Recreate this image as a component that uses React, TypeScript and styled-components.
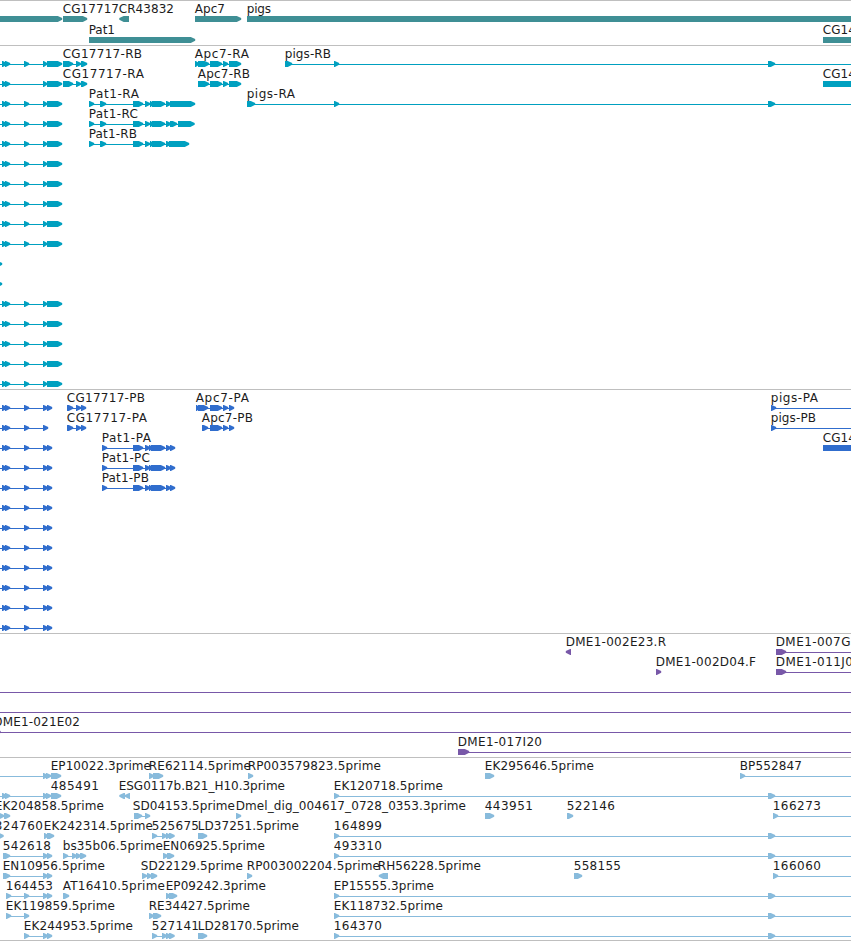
import React from "react";
import styled, { createGlobalStyle } from "styled-components";

const GlobalStyle = createGlobalStyle`
  html, body { margin: 0; padding: 0; background: #fff; overflow: hidden; }
`;

const WIDTH = 851;

type Direction = "right" | "left" | "none";
type Block = [start: number, end: number, direction?: Direction];

interface Feature {
  name?: string;
  /** Left and right edge of the label. */
  label?: [number, number];
  blocks?: Block[];
  /** Extent of the connecting intron line. */
  line?: [number, number];
}

interface TrackData {
  id: string;
  color: string;
  height: number;
  rowHeight: number;
  rows: Feature[][];
}

const Browser = styled.main`
  display: flex;
  flex-direction: column;
  width: ${WIDTH}px;
  height: 941px;
  overflow: hidden;
  background: #fff;
`;

const Track = styled.section<{ $height: number; $color: string }>`
  box-sizing: border-box;
  flex: none;
  display: flex;
  flex-direction: column;
  height: ${(p) => p.$height}px;
  padding-top: 1px;
  border-top: 1px solid #bfbfbf;
  color: ${(p) => p.$color};
`;

const BottomRule = styled.div`
  flex: none;
  height: 1px;
  background: #bfbfbf;
`;

const Row = styled.svg<{ $height: number }>`
  display: block;
  flex: none;
  width: ${WIDTH}px;
  height: ${(p) => p.$height}px;
  overflow: hidden;
`;

const Label = styled.text`
  fill: #1c1c1c;
  font-family: "DejaVu Sans", "Liberation Sans", sans-serif;
  font-size: 12px;
`;

const Shape = styled.path`
  fill: currentColor;
`;

const TOP = 14;
const BOTTOM = 20;
const HEAD = 6;

/* A block is a bar whose pointed end bulges slightly and is blunted at the tip. */
function blockPath([a, b, direction = "right"]: Block): string {
  if (direction === "none") {
    return `M${a} ${TOP}H${b}V${BOTTOM}H${a}Z`;
  }
  const head = Math.min(b - a, HEAD);
  const back = direction === "left" ? b : a;
  const tip = direction === "left" ? a : b;
  const sign = direction === "left" ? 1 : -1;
  const neck = tip + sign * (head - 0.8);
  return [
    `M${back} ${TOP}`,
    `H${neck}`,
    `L${tip + sign * 0.8} 16`,
    `V17.8`,
    `L${neck} ${BOTTOM}`,
    `H${back}Z`,
  ].join("");
}

function FeatureGlyph({ name, label, blocks = [], line }: Feature) {
  return (
    <g>
      {line && <Shape d={`M${line[0]} 17H${line[1]}v1H${line[0]}Z`} />}
      {blocks.map((block, i) => (
        <Shape key={i} d={blockPath(block)} />
      ))}
      {name && label && (
        <Label x={label[0] - 0.3} y={11} textLength={label[1] - label[0] + 0.3} lengthAdjust="spacing">
          {name}
        </Label>
      )}
    </g>
  );
}

const repeat = <T,>(count: number, make: (i: number) => T): T[] =>
  Array.from({ length: count }, (_, i) => make(i));

const f = (
  name: string,
  from: number,
  to: number,
  blocks: Block[] = [],
  line?: [number, number],
): Feature => ({ name, label: [from, to], blocks, line });

/* Transcripts */
const leftTranscript: Feature = {
  line: [0, 50],
  blocks: [[2, 8], [5, 11], [24, 30], [43, 48], [47, 63]],
};
const leftTranscriptShort: Feature = {
  line: [0, 50],
  blocks: [[2, 8], [5, 11], [43, 48], [47, 63]],
};
const clippedTip: Feature = { blocks: [[-8, 3]] };
const cg17717: Block[] = [[63, 74], [76, 82], [81, 88]];
const apc7Tail: Block[] = [[210, 223], [223, 229], [229, 242]];
const pat1Head: Block[] = [[89, 95], [100, 107], [133, 144], [145, 151], [150, 154], [152, 166]];

const transcriptLabels: Feature[][] = [
  [
    f("CG17717-RB", 63, 142, cg17717, [63, 86]),
    f("Apc7-RA", 195, 249, [[195, 200], [198, 210], ...apc7Tail], [195, 240]),
    f("pigs-RB", 285, 331, [[285, 293], [334, 340], [768, 776]], [285, WIDTH]),
  ],
  [
    f("CG17717-RA", 63, 144, cg17717, [63, 86]),
    f("Apc7-RB", 198, 250, [[198, 210], ...apc7Tail], [198, 240]),
    f("CG14", 823, 856, [[823, 860, "none"]]),
  ],
  [
    f("Pat1-RA", 89, 139, [...pat1Head, [166, 172], [170, 196]], [89, 190]),
    f("pigs-RA", 247, 295, [[247, 256], [334, 340], [768, 776]], [247, WIDTH]),
  ],
  [f("Pat1-RC", 89, 138, [...pat1Head, [166, 172], [170, 178], [178, 195.5]], [89, 190])],
  [f("Pat1-RB", 89, 137, [...pat1Head, [166, 172], [169, 190]], [89, 185])],
];

/* Coding sequences */
const cdsPat1 = (name: string, end: number) =>
  f(
    name,
    102,
    end,
    [[102, 108], [133, 144], [145, 151], [149, 153], [151, 166], [166, 172], [170, 176]],
    [102, 174],
  );
const cds17717: Block[] = [[67, 74], [76, 82], [81, 87]];
const cdsApc7Tail: Block[] = [[210, 223], [223, 229], [229, 235]];

const cdsLabels: Feature[][] = [
  [
    f("CG17717-PB", 67, 145, cds17717, [67, 84]),
    f("Apc7-PA", 196, 249, [[196, 200], [198, 209], ...cdsApc7Tail], [196, 232]),
    f("pigs-PA", 771, 818, [[771, 777]], [771, WIDTH]),
  ],
  [
    f("CG17717-PA", 67, 147, cds17717, [67, 84]),
    f("Apc7-PB", 202, 253, [[202, 209], ...cdsApc7Tail], [202, 232]),
    f("pigs-PB", 771, 816, [[771, 777]], [771, WIDTH]),
  ],
  [cdsPat1("Pat1-PA", 151), f("CG14", 823, 856, [[823, 860, "none"]])],
  [cdsPat1("Pat1-PC", 150)],
  [cdsPat1("Pat1-PB", 149)],
];

/* Expressed sequence tags */
const long = (name: string, end: number) =>
  f(name, 334, end, [[334, 340], [768, 776]], [334, WIDTH]);
const tailPair: Block[] = [[43, 49], [47, 53]];
const tailTriple: Block[] = [[43, 49], [46, 52], [51, 62]];
const quad: Block[] = [[152, 158], [162, 168], [166, 172], [169, 175.5]];

const estRows: Feature[][] = [
  [
    f("EP10022.3prime", 51, 151, tailTriple, [0, 50]),
    f("RE62114.5prime", 149, 251, [[149, 155], [153, 164]]),
    f("RP003579823.5prime", 248, 381, [[248, 254]]),
    f("EK295646.5prime", 485, 594, [[485, 495]]),
    f("BP552847", 740, 802, [[740, 746]], [740, WIDTH]),
  ],
  [
    f("485491", 51, 99, [[2, 8], [5, 11], ...tailTriple], [0, 50]),
    f("ESG0117b.B21_H10.3prime", 119, 285, [[118.5, 125, "left"], [124, 130, "left"]]),
    long("EK120718.5prime", 443),
  ],
  [
    f("EK204858.5prime", -5, 104, [[-1, 5], [4, 11]], [0, 6]),
    f("SD04153.5prime", 133, 235, [[134, 143], [145, 151]], [134, 147]),
    f("Dmel_dig_004617_0728_0353.3prime", 236, 466, [[236, 242]]),
    f("443951", 485, 533, [[485, 495]]),
    f("522146", 567, 615, [[567, 574]]),
    f("166273", 773, 821, [[773, 779]], [773, WIDTH]),
  ],
  [
    f("324760", -5, 43, [[-2, 4.5]]),
    f("EK242314.5prime", 44, 153, [[44, 49], [47, 55]]),
    f("525675", 152, 199, quad, [152, 170]),
    f("LD37251.5prime", 198, 299, [[198, 208]]),
    long("164899", 382),
  ],
  [
    f("542618", 3, 51, [[3, 11], ...tailPair], [3, 50]),
    f("bs35b06.5prime", 63, 163, [[63, 69], [72, 78], [76, 82], [80, 87]], [63, 82]),
    f("EN06925.5prime", 163, 265, [[163, 169], [167, 175]]),
    long("493310", 382),
  ],
  [
    f("EN10956.5prime", 3, 105, [[3, 11], ...tailPair], [3, 50]),
    f("SD22129.5prime", 141, 243, [[142, 148], [147, 153], [151, 158]]),
    f("RP003002204.5prime", 247, 380, [[247, 253]]),
    f("RH56228.5prime", 378, 481, [[378, 388, "left"]]),
    f("558155", 574, 621, [[574, 583]]),
    f("166060", 773, 821, [[773, 779]], [773, WIDTH]),
  ],
  [
    f("164453", 6, 53, [[6, 12], [24, 30], ...tailPair], [6, 50]),
    f("AT16410.5prime", 63, 165, [[63, 70]]),
    f("EP09242.3prime", 166, 266, [[166, 172], [169, 178]]),
    long("EP15555.3prime", 434),
  ],
  [
    f("EK119859.5prime", 6, 115, [[6, 12], [24, 30]], [6, 26]),
    f("RE34427.5prime", 149, 250, [[149, 155], [153, 162]]),
    long("EK118732.5prime", 443),
  ],
  [
    f("EK244953.5prime", 24, 133, [[24, 30], ...tailPair], [24, 50]),
    f("527141", 152, 199, quad, [152, 170]),
    f("LD28170.5prime", 198, 299, [[198, 208]]),
    long("164370", 382),
  ],
];

const tracks: TrackData[] = [
  {
    id: "genes",
    color: "#3f8f95",
    height: 45,
    rowHeight: 21,
    rows: [
      [
        { blocks: [[-8, 63]] },
        f("CG17717", 63, 119, [[63, 88]]),
        f("CR43832", 119, 174, [[118.5, 129, "left"]]),
        f("Apc7", 195, 225, [[195, 242]]),
        f("pigs", 247, 271, [[247, 860, "none"]]),
      ],
      [f("Pat1", 89, 115, [[89, 196]]), f("CG14", 823, 856, [[823, 860, "none"]])],
    ],
  },
  {
    id: "transcripts",
    color: "#00a0c0",
    height: 344,
    rowHeight: 20,
    rows: repeat(17, (i) => [
      i === 10 || i === 11 ? clippedTip : i === 1 ? leftTranscriptShort : leftTranscript,
      ...(transcriptLabels[i] ?? []),
    ]),
  },
  {
    id: "cds",
    color: "#306dcd",
    height: 244,
    rowHeight: 20,
    rows: repeat(12, (i) => [
      {
        line: [0, i === 1 ? 46 : 50],
        blocks: [[2, 8], [5, 11], [24, 30], [43, 49], ...(i === 1 ? [] : ([[47, 53]] as Block[]))],
      },
      ...(cdsLabels[i] ?? []),
    ]),
  },
  {
    id: "bacs",
    color: "#7858a8",
    height: 124,
    rowHeight: 20,
    rows: [
      [
        f("DME1-002E23.R", 566, 666, [[565, 571, "left"]]),
        f("DME1-007G", 776, 850.5, [[776, 787]], [776, WIDTH]),
      ],
      [
        f("DME1-002D04.F", 656, 756, [[656, 662]]),
        f("DME1-011J0", 776, 853, [[776, 787]], [776, WIDTH]),
      ],
      [{ line: [0, WIDTH] }],
      [{ line: [0, WIDTH] }],
      [f("DME1-021E02", -6.5, 80, [[-5, 1.5]], [0, WIDTH])],
      [f("DME1-017I20", 458, 542, [[458, 470]], [458, WIDTH])],
    ],
  },
  { id: "ests", color: "#88bbdc", height: 183, rowHeight: 20, rows: estRows },
];

export default function App() {
  return (
    <>
      <GlobalStyle />
      <Browser>
        {tracks.map((track) => (
          <Track key={track.id} $height={track.height} $color={track.color}>
            {track.rows.map((features, i) => (
              <Row key={i} $height={track.rowHeight}>
                {features.map((feature, j) => (
                  <FeatureGlyph key={j} {...feature} />
                ))}
              </Row>
            ))}
          </Track>
        ))}
        <BottomRule />
      </Browser>
    </>
  );
}
